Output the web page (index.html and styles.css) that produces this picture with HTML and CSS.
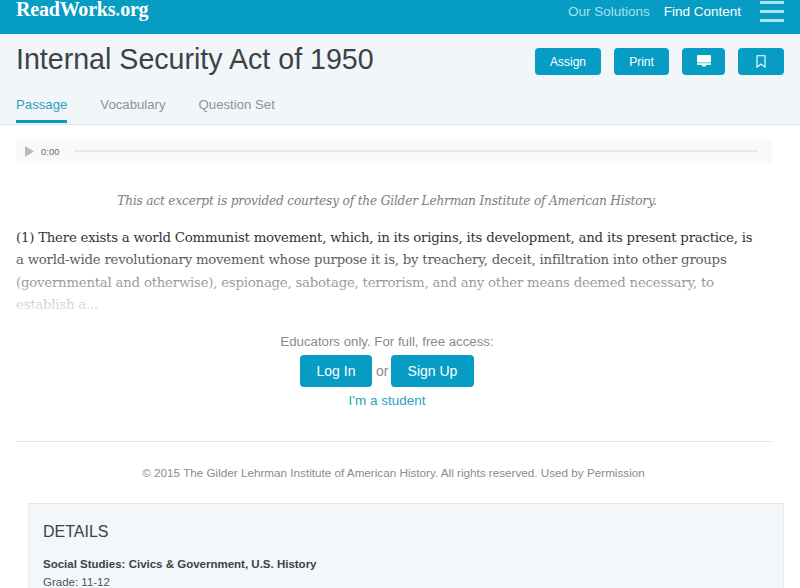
FILE: index.html
```html
<!DOCTYPE html>
<html lang="en">
<head>
<meta charset="UTF-8">
<title>Internal Security Act of 1950</title>
<link rel="stylesheet" href="styles.css">
</head>
<body>

<header class="topbar">
  <a class="logo">ReadWorks<span class="logo-dot">.</span>org</a>
  <nav class="topnav">
    <a class="topnav-dim">Our Solutions</a>
    <a>Find Content</a>
    <span class="burger"><i></i><i></i><i></i></span>
  </nav>
</header>

<section class="titlebar">
  <div class="title-row">
    <h1>Internal Security Act of 1950</h1>
    <div class="actions">
      <button class="btn btn-assign">Assign</button>
      <button class="btn btn-print">Print</button>
      <button class="btn btn-screen" aria-label="Projector view">
        <svg class="screen-icon" width="14" height="12" viewBox="0 0 14 12"><path d="M1 0h12a1 1 0 0 1 1 1v8a1 1 0 0 1-1 1H9v1.500H5V10H1a1 1 0 0 1-1-1V1a1 1 0 0 1 1-1z" fill="#fff"/><path d="M0 7.800h14" stroke="#069cc4" stroke-width="0.7"/></svg>
      </button>
      <button class="btn btn-mark" aria-label="Bookmark">
        <svg width="10" height="13" viewBox="0 0 10 13"><path d="M1 .7h8v11.400L5 9 1 12.100z" fill="none" stroke="#fff" stroke-width="1.100"/></svg>
      </button>
    </div>
  </div>
  <div class="tabs">
    <a class="tab tab-active">Passage</a>
    <a class="tab">Vocabulary</a>
    <a class="tab">Question Set</a>
  </div>
</section>

<main class="content">
  <div class="audio">
    <svg width="9" height="11" viewBox="0 0 9 11"><path d="M0 0l9 5.500L0 11z" fill="#b9b9b9"/></svg>
    <span class="audio-time">0:00</span>
    <div class="audio-track"></div>
  </div>

  <p class="courtesy">This act excerpt is provided courtesy of the Gilder Lehrman Institute of American History.</p>

  <div class="passage">
    <p>(1) There exists a world Communist movement, which, in its origins, its development, and its present practice, is<br>
    a world-wide revolutionary movement whose purpose it is, by treachery, deceit, infiltration into other groups<br>
    (governmental and otherwise), espionage, sabotage, terrorism, and any other means deemed necessary, to<br>
    establish a...</p>
    <div class="passage-fade"></div>
  </div>

  <div class="access">
    <p class="access-note">Educators only. For full, free access:</p>
    <div class="access-btns">
      <button class="btn-big btn-login">Log In</button>
      <span class="access-or">or</span>
      <button class="btn-big btn-signup">Sign Up</button>
    </div>
    <a class="student-link">I'm a student</a>
  </div>

  <hr class="rule">
  <p class="copyright">© 2015 The Gilder Lehrman Institute of American History. All rights reserved. Used by Permission</p>

  <section class="details">
    <h2>DETAILS</h2>
    <p class="details-subject">Social Studies: Civics &amp; Government, U.S. History</p>
    <p class="details-grade">Grade: 11-12</p>
  </section>
</main>

</body>
</html>
```

FILE: styles.css
```css
html, body {
  margin: 0;
  height: 588px;
  overflow: hidden;
}

body {
  background: #fff;
  color: #3a4348;
  font-family: "Liberation Sans", Arial, sans-serif;
}

p, h1, h2 {
  margin: 0;
  font-weight: normal;
}

button {
  font-family: inherit;
  border: none;
  color: #fff;
  background: #069cc4;
}

.topbar {
  height: 34px;
  background: #069cc4;
  display: flex;
  justify-content: space-between;
  padding: 0 16px;
}

.logo {
  font-family: "Liberation Serif", serif;
  font-weight: bold;
  font-size: 20px;
  line-height: 18px;
  letter-spacing: -0.2px;
  color: #fff;
}

.logo-dot {
  color: #bfe6f1;
}

.topnav {
  display: flex;
  align-items: flex-start;
  font-size: 13.500px;
  line-height: 23px;
  color: #fff;
}

.topnav-dim {
  color: #a3e2f0;
  margin-right: 14px;
}

.burger {
  display: flex;
  flex-direction: column;
  gap: 6px;
  width: 24px;
  margin: 1px 0 0 19px;
}

.burger i {
  display: block;
  height: 3px;
  background: #a9e6f3;
}

.titlebar {
  height: 90px;
  background: #f3f6f8;
  border-bottom: 1px solid #dde2e4;
  padding: 0 16px;
}

.title-row {
  display: flex;
  justify-content: space-between;
  height: 60px;
}

h1 {
  font-size: 28.600px;
  line-height: 36px;
  margin-top: 7px;
  color: #3a4348;
}

.actions {
  display: flex;
  gap: 13px;
  padding-top: 14px;
}

.btn {
  height: 27px;
  padding: 0;
  border-radius: 4px;
  font-size: 12px;
  display: flex;
  align-items: center;
  justify-content: center;
}

.btn-assign { width: 66px; }
.btn-print { width: 55px; }
.btn-screen { width: 43px; }
.btn-mark { width: 46px; }

.screen-icon {
  margin-bottom: 2px;
}

.tabs {
  display: flex;
  gap: 33px;
}

.tab {
  font-size: 13.200px;
  line-height: 22px;
  box-sizing: border-box;
  height: 29px;
  color: #8a9499;
}

.tab-active {
  color: #2ba0c2;
  border-bottom: 3px solid #069cc4;
}

.content {
  padding: 14px 16px 0;
}

.audio {
  width: 756px;
  height: 24px;
  background: #f9f9f9;
  display: flex;
  align-items: center;
  box-sizing: border-box;
  padding: 0 14px 0 9px;
}

.audio-time {
  font-size: 9.500px;
  color: #6f6f6f;
  margin: 0 14px 0 7px;
}

.audio-track {
  flex: 1;
  height: 2px;
  background: #e8e8e8;
}

.courtesy {
  font-family: "DejaVu Serif", serif;
  font-style: italic;
  font-size: 12.200px;
  letter-spacing: -0.2px;
  line-height: 20px;
  color: #7d7d7d;
  text-align: center;
  width: 742px;
  margin-top: 28px;
}

.passage {
  position: relative;
  margin-top: 15.500px;
  font-family: "DejaVu Serif", serif;
  font-size: 13.300px;
  letter-spacing: -0.23px;
  line-height: 22.500px;
  color: #333;
  white-space: nowrap;
}

.passage-fade {
  position: absolute;
  left: 0;
  right: 0;
  top: 18px;
  height: 72px;
  background: linear-gradient(rgba(255, 255, 255, 0), rgba(255, 255, 255, 0.95));
}

.access {
  width: 742px;
  margin-top: 15.500px;
  display: flex;
  flex-direction: column;
  align-items: center;
}

.access-note {
  font-size: 13.250px;
  line-height: 20px;
  color: #8b8b8b;
}

.access-btns {
  display: flex;
  align-items: center;
  gap: 4px;
  margin-top: 3px;
}

.btn-big {
  height: 32px;
  border-radius: 4px;
  font-size: 14px;
  padding: 0;
}

.btn-login { width: 72px; }
.btn-signup { width: 83px; }

.access-or {
  font-size: 14px;
  color: #8b8b8b;
  width: 11px;
  text-align: center;
}

.student-link {
  font-size: 13.500px;
  line-height: 20px;
  color: #2ba0c2;
  margin-top: 4px;
}

.rule {
  border: none;
  border-top: 1px solid #e4e6e7;
  width: 756px;
  margin: 30px 0 0;
}

.copyright {
  font-size: 11.700px;
  line-height: 18px;
  color: #8b8b8b;
  text-align: center;
  width: 755px;
  margin-top: 22px;
}

.details {
  margin: 21px 0 0 12px;
  width: 756px;
  height: 90px;
  box-sizing: border-box;
  background: #f3f7f9;
  border: 1px solid #e6eaec;
  border-bottom: none;
  padding: 17px 14px 0;
}

.details h2 {
  font-size: 16px;
  line-height: 22px;
  color: #3a4348;
}

.details-subject {
  font-size: 11.500px;
  font-weight: bold;
  line-height: 17px;
  color: #3a4348;
  margin-top: 13px;
}

.details-grade {
  font-size: 11.500px;
  line-height: 17px;
  color: #555;
  margin-top: 1px;
}
```
